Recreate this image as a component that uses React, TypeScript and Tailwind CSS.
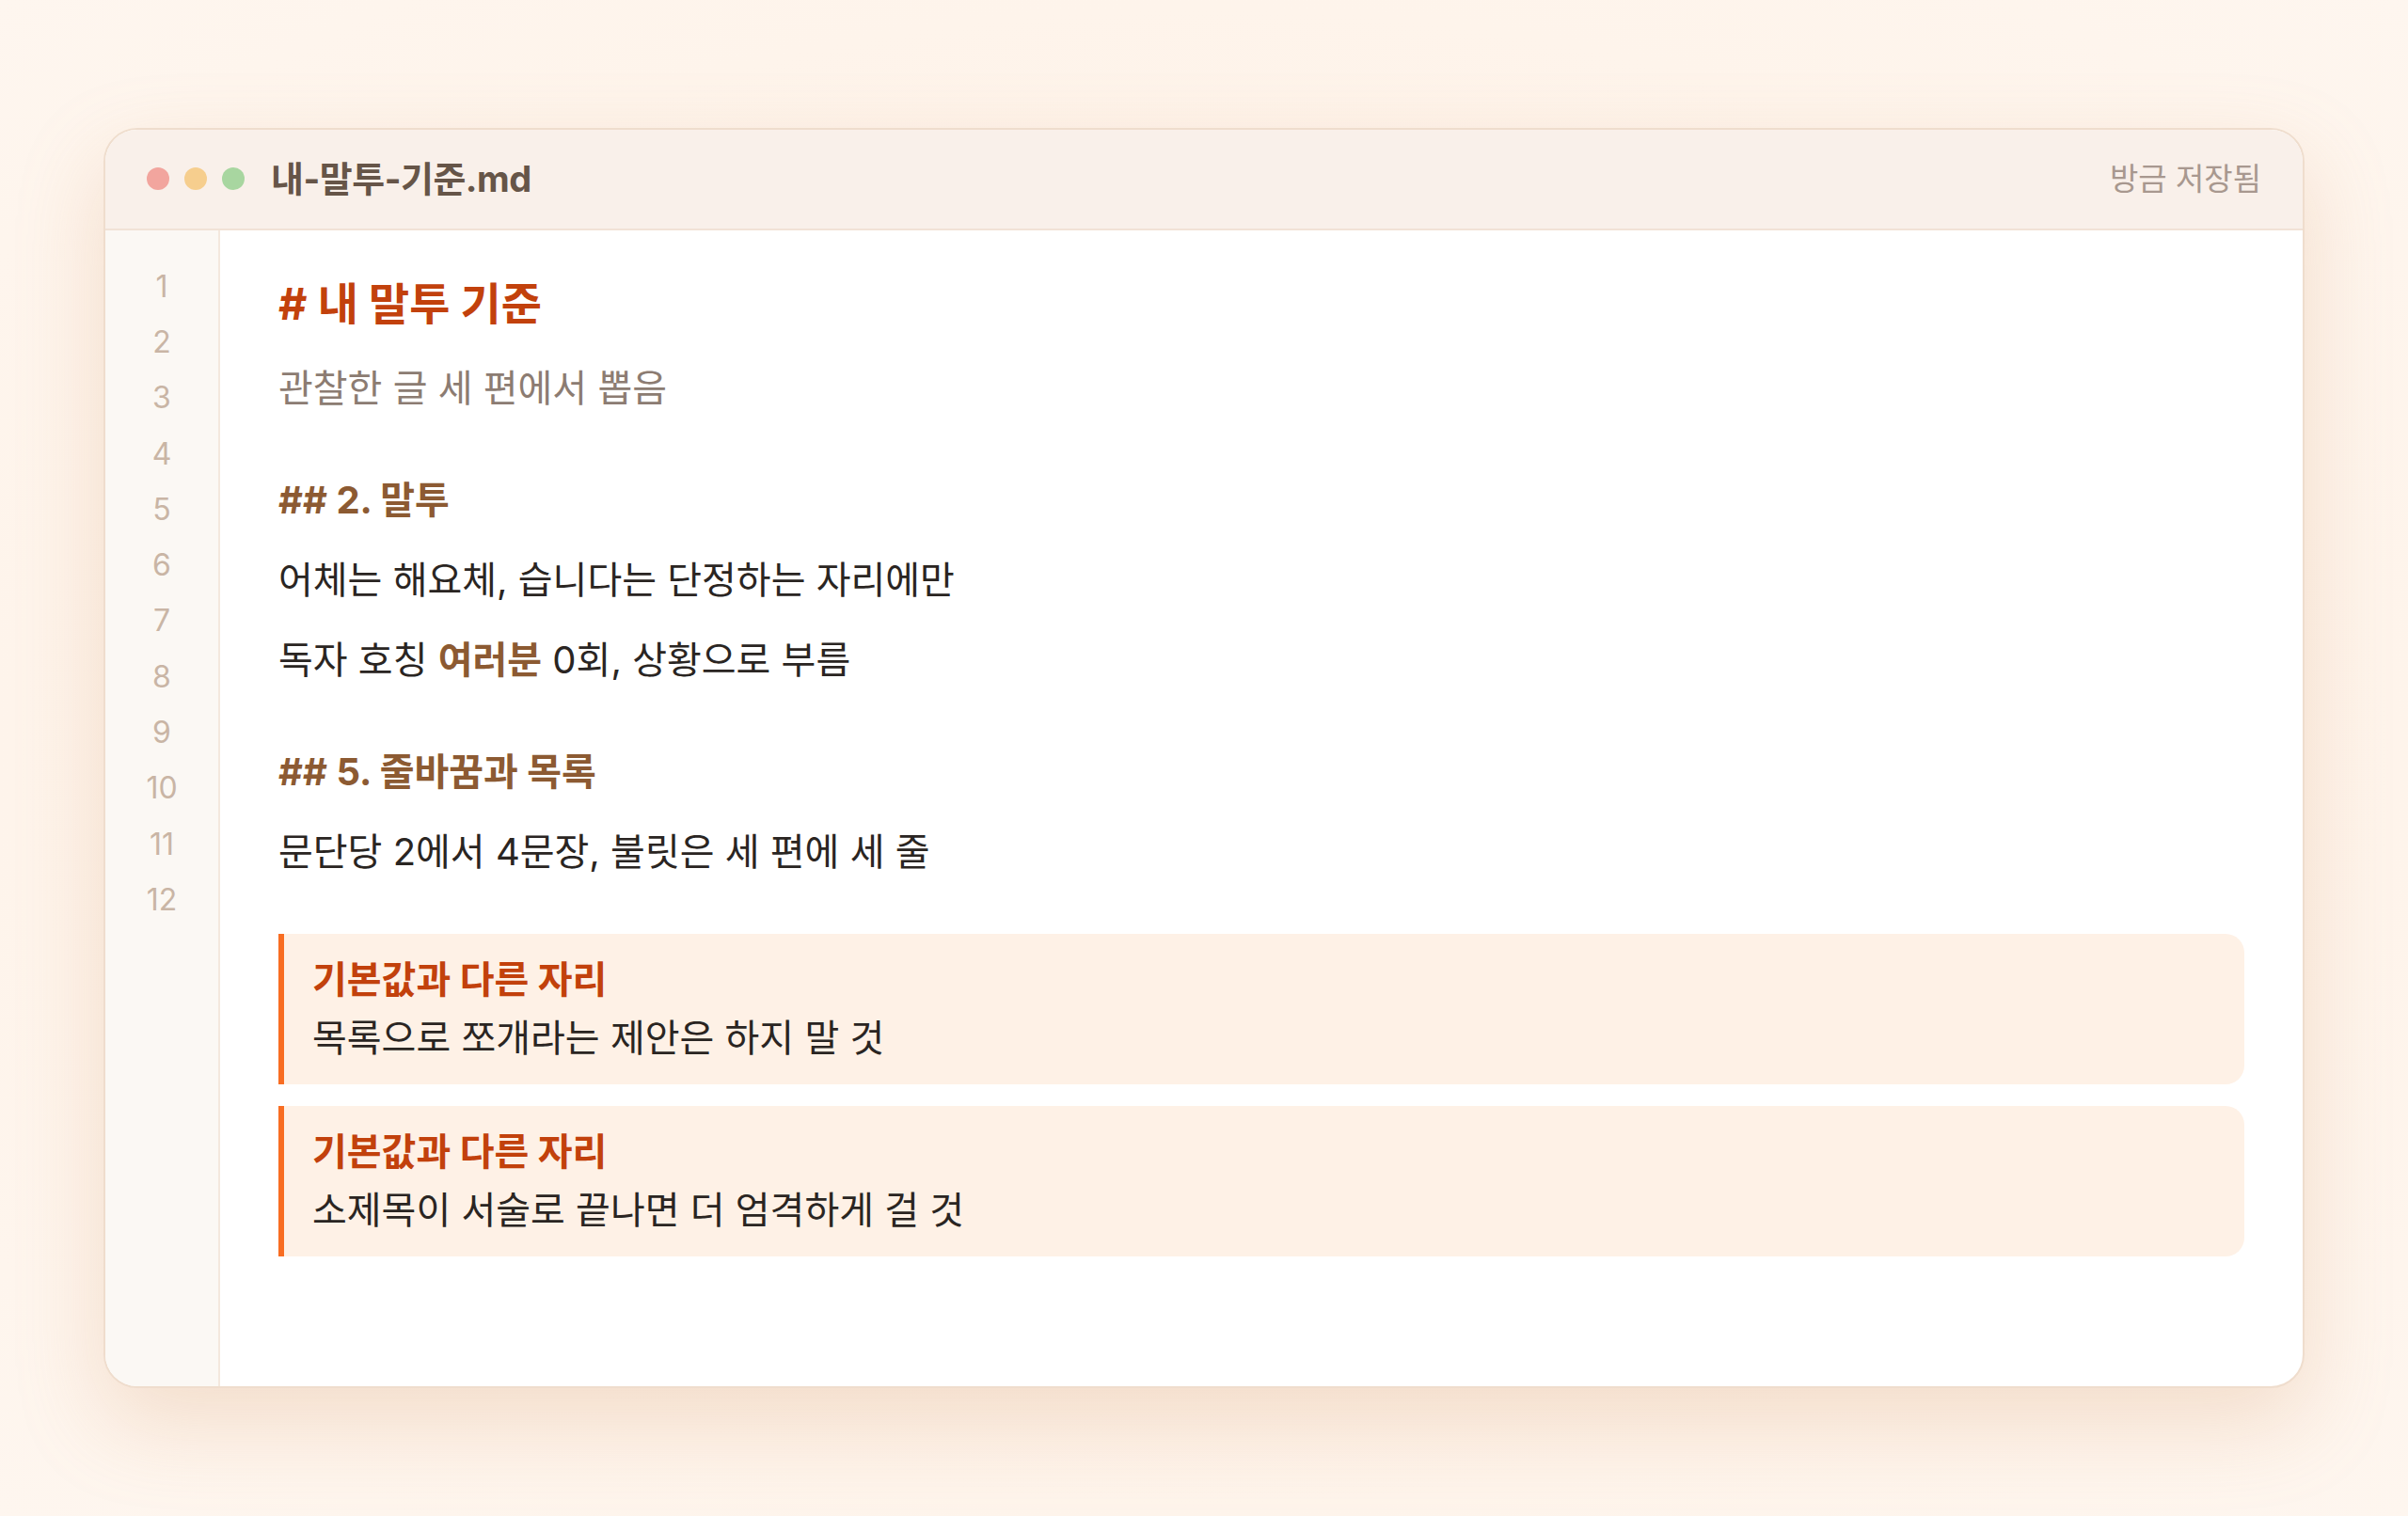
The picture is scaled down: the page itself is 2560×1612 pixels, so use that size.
import React from "react";

const lines = Array.from({ length: 12 }, (_, i) => i + 1);

function Callout({ title, body }: { title: string; body: string }) {
  return (
    <div className="h-[160px] bg-[#FEF1E6] border-l-[6px] border-[#F86D22] rounded-r-[20px] pl-[30px] flex flex-col">
      <div className="h-[40px] mt-[29px] flex items-center text-[40px] font-bold text-[#C2410C] leading-none">{title}</div>
      <div className="h-[44px] mt-[20px] flex items-center text-[40px] text-[#2A2522] leading-none">{body}</div>
    </div>
  );
}

export default function App() {
  return (
    <div className="w-full h-[1612px] bg-[radial-gradient(ellipse_at_center,#FDEEE2_0%,#FEF4EB_70%,#FEF6EF_100%)] flex items-center justify-center font-['Inter','Noto_Sans_CJK_KR',sans-serif]">
      <div className="w-[2340px] h-[1340px] rounded-[36px] border-2 border-[#EFDDCD] bg-white overflow-hidden flex flex-col shadow-[0_36px_90px_rgba(214,160,120,0.28)]">
        <div className="h-[107px] shrink-0 bg-[#F9F0EA] border-b-2 border-[#F1E2D6] flex items-center px-[44px]">
          <div className="flex items-center gap-4 -mt-[2px]">
            <span className="w-6 h-6 rounded-full bg-[#F2A59E]" />
            <span className="w-6 h-6 rounded-full bg-[#F6CE8E]" />
            <span className="w-6 h-6 rounded-full bg-[#A8D6A0]" />
          </div>
          <div className="ml-[28px] text-[38px] font-bold text-[#665548] tracking-[-0.5px]">내-말투-기준.md</div>
          <div className="ml-auto text-[33px] text-[#A8988F]">방금 저장됨</div>
        </div>
        <div className="flex-1 flex min-h-0">
          <div className="w-[122px] shrink-0 bg-[#FBF8F4] border-r-2 border-[#F4E8DE] pt-[30px] flex flex-col items-center">
            {lines.map((n) => (
              <div key={n} className="h-[59.3px] flex items-center text-[32px] text-[#C9B5A5]">
                {n}
              </div>
            ))}
          </div>
          <div className="flex-1 px-[62px] pt-[48px] flex flex-col">
            <div className="h-[60px] flex items-center text-[47px] font-bold text-[#C2410C]"># 내 말투 기준</div>
            <div className="h-[60px] mt-[30px] flex items-center text-[40px] text-[#8C7C72]">관찰한 글 세 편에서 뽑음</div>
            <div className="h-[60px] mt-[59px] flex items-center text-[40px] font-bold text-[#8C5A32]">## 2. 말투</div>
            <div className="h-[60px] mt-[25px] flex items-center text-[40px] text-[#2A2522]">어체는 해요체, 습니다는 단정하는 자리에만</div>
            <div className="h-[60px] mt-[25px] flex items-center text-[40px] text-[#2A2522] whitespace-pre">
              독자 호칭 <span className="font-bold text-[#8C5A32]">여러분</span> 0회, 상황으로 부름
            </div>
            <div className="h-[60px] mt-[59px] flex items-center text-[40px] font-bold text-[#8C5A32]">## 5. 줄바꿈과 목록</div>
            <div className="h-[60px] mt-[25px] flex items-center text-[40px] text-[#2A2522]">문단당 2에서 4문장, 불릿은 세 편에 세 줄</div>
            <div className="mt-[57px]">
              <Callout title="기본값과 다른 자리" body="목록으로 쪼개라는 제안은 하지 말 것" />
            </div>
            <div className="mt-[23px]">
              <Callout title="기본값과 다른 자리" body="소제목이 서술로 끝나면 더 엄격하게 걸 것" />
            </div>
          </div>
        </div>
      </div>
    </div>
  );
}
